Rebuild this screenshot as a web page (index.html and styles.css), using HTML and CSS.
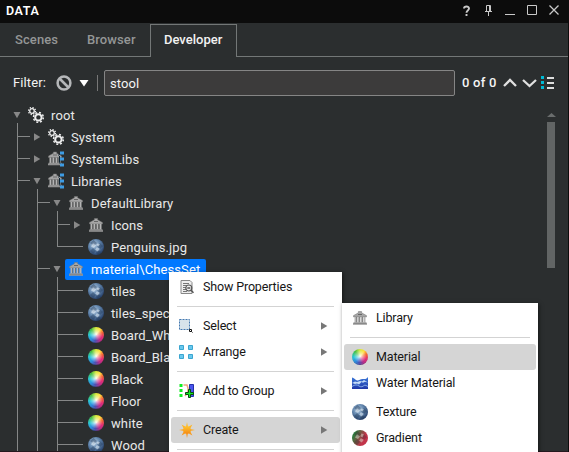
FILE: index.html
```html
<!DOCTYPE html>
<html lang="en">
<head>
<meta charset="utf-8">
<title>Data</title>
<link rel="stylesheet" href="styles.css">
</head>
<body>
<svg class="defs" aria-hidden="true">
  <defs>
    <radialGradient id="gBlue" cx=".4" cy=".35" r=".68"><stop offset="0" stop-color="#b5cce2"/><stop offset=".5" stop-color="#6488af"/><stop offset="1" stop-color="#243e68"/></radialGradient>
    <radialGradient id="gShade" cx=".5" cy=".45" r=".55"><stop offset="0" stop-color="#fff" stop-opacity=".95"/><stop offset=".35" stop-color="#fff" stop-opacity=".45"/><stop offset=".75" stop-color="#fff" stop-opacity="0"/><stop offset="1" stop-color="#000" stop-opacity=".3"/></radialGradient>
    <linearGradient id="gSun" x2="0" y2="1"><stop offset="0" stop-color="#ffc52e"/><stop offset="1" stop-color="#f58a16"/></linearGradient>
    <linearGradient id="gRG" x2="1" y2=".5"><stop offset=".2" stop-color="#2c7a3c"/><stop offset=".8" stop-color="#c2344a"/></linearGradient>
    <linearGradient id="gWater" x2="0" y2="1"><stop offset="0" stop-color="#3b78d8"/><stop offset="1" stop-color="#2038a8"/></linearGradient>
    <clipPath id="ball"><circle cx="8" cy="8" r="7.9"/></clipPath>
  </defs>
  <symbol id="gears" viewBox="0 0 16 16">
    <g fill="none" stroke="#efefef">
      <circle cx="4" cy="4" r="2.3" stroke-width="1.3"/><circle cx="4" cy="4" r="3.5" stroke-width="1.3" stroke-dasharray="1.3 1.45"/>
      <circle cx="10.4" cy="10.4" r="3.2" stroke-width="2"/><circle cx="10.4" cy="10.4" r="4.9" stroke-width="1.5" stroke-dasharray="2 1.85"/>
    </g>
  </symbol>
  <symbol id="bank" viewBox="0 0 16 16">
    <path fill="#a6a6a6" stroke="#777" stroke-width=".5" d="M1.5 5.6 6.4 2.8V1.5h3.2v1.3l4.9 2.8v1.3h-13z"/>
    <path fill="#b4b4b4" d="M2.5 7h2v5.5h-2zM5.4 7h2v5.5h-2zM8.5 7h2v5.5h-2zM11.5 7h2v5.5h-2z"/>
    <path fill="#666" d="M4.1 7h.7v5.5h-.7zM7.1 7h.7v5.5h-.7zM10.1 7h.7v5.5h-.7zM6 4h4v1H6z"/>
    <path fill="#9b9b9b" d="M1.5 12.2h13v1H15v1.6H1v-1.6h.5z"/><path fill="#777" d="M1.5 13.2h13v.5h-13z"/>
  </symbol>
  <symbol id="banks" viewBox="0 0 16 16">
    <use href="#bank" x="-1" y="-.5" width="16" height="16"/>
    <path fill="none" stroke="#0d2434" d="M10.500 4.500 12 2.500M11.500 5v6l1 2.500M11.500 8H13"/>
    <path fill="#3e9ce4" d="M12 .5h4v3h-4zM12 6.500h4v3h-4zM12 12.500h4v3h-4z"/>
  </symbol>
  <symbol id="texture" viewBox="0 0 16 16">
    <circle cx="8" cy="8" r="8" fill="url(#gBlue)"/>
    <g clip-path="url(#ball)"><path fill="#1d3552" opacity=".4" d="M5.500 1 9 4 6 7 2 4zM12 4l3 3-3 3-3-3zM5 9l3 3-3 3-3-3zM10 11l3 2-3 3-2-2z"/><path fill="#dce8f2" opacity=".6" d="M5 4.300 8 6.500 6 9 3 7.600zM9.500 4.400l2.400.8-1.500 2.200-2-1.100zM8.800 8.300l3 1.500-2 2.800-2.600-1.800z"/></g>
  </symbol>
  <symbol id="gradient" viewBox="0 0 16 16">
    <circle cx="8" cy="8" r="8" fill="url(#gRG)"/>
    <g clip-path="url(#ball)"><path fill="#17232a" opacity=".25" d="M5.500 1 9 4 6 7 2 4zM12 4l3 3-3 3-3-3zM5 9l3 3-3 3-3-3z"/><path fill="#e6eee1" opacity=".45" d="M5 4.300 8 6.500 6 9 3 7.600zM9.500 3.400l2.400.8-1.500 3.200-2-1.100zM8.800 8.300l3 1.500-2 2.800-2.600-1.800z"/></g>
  </symbol>
  <symbol id="glass" viewBox="0 0 16 16"><circle cx="8" cy="8" r="8" fill="url(#gShade)"/></symbol>
  <symbol id="water" viewBox="0 0 16 16">
    <path fill="url(#gWater)" d="M0 2.500c2 0 3 2.500 5 3S8 4 10.500 4 14 4.500 16 2v12H0z"/>
    <path fill="#c4dcf8" d="m0 8 3-1.500 2 .5 3-1 2 .5 2-1.500 4 2.500-3-.7-2 1-1.500-.8L7 9.500 5 8.500 3 9z"/>
    <path fill="none" stroke="#9fc3f2" stroke-width=".8" d="M0 11.500c3-2 5-2 7-.5s4 .5 5-.5 3 .5 4 1"/>
  </symbol>
  <symbol id="tri-r" viewBox="0 0 8 8"><path d="M1 .3 7.300 4 1 7.700z"/></symbol>
  <symbol id="tri-d" viewBox="0 0 8 8"><path d="M.5 1h7L4 7.300z"/></symbol>
</svg>

<div class="window">
  <header class="titlebar">
    <h1>DATA</h1>
    <svg class="controls" width="104" height="16" viewBox="0 0 104 16">
      <g fill="none" stroke="#c9c9c9">
        <path stroke-width="1.900" d="M3 4.500C3.200 1.900 8 1.800 8 4.600c0 1.900-2.500 2-2.500 4.100M5.500 10v2"/>
        <path d="M25.500 1.500h4v6h-4zM24 7.500h7M27.500 8v4M28.500 2v5"/>
        <path d="M44 10.500h10M66.500 1.500h9v9h-9z"/>
        <path stroke-width="1.300" d="m88.500 1.500 9 9m0-9-9 9"/>
      </g>
    </svg>
  </header>
  <nav class="tabs">
    <span class="tab scenes">Scenes</span><span class="tab browser">Browser</span><span class="tab active">Developer</span><span class="rest"></span>
  </nav>
  <div class="filter">
    <label>Filter:</label>
    <svg class="ban" width="16" height="16" viewBox="0 0 16 16"><g fill="none" stroke="#b5b7b9" stroke-width="2.500"><circle cx="8" cy="8" r="6.400"/><path d="m4 4 8 8"/></g></svg>
    <svg class="drop" width="10" height="8" viewBox="0 0 10 8"><path fill="#fff" d="M.5 1h9L5 7.500z"/></svg>
    <span class="sep"></span>
    <div class="field">stool</div>
    <span class="count">0 of 0</span>
    <svg class="nav" width="54" height="16" viewBox="0 0 54 16">
      <path fill="none" stroke="#e0e0e0" stroke-width="2.300" d="m1 11 6-6 6 6M20 5l6.500 6L33 5"/>
      <path fill="#00b9d4" d="M38 1h3v3h-3zM38 6h3v3h-3zM38 11h3v3h-3z"/><path fill="#ddd" d="M44 2h7v2h-7zM44 7h7v2h-7zM44 12h7v2h-7z"/>
    </svg>
  </div>
  <main class="content">
    <ul class="tree">
      <li><i class="node open"><svg><use href="#tri-d"/></svg></i><span class="item"><svg class="icon"><use href="#gears"/></svg>root</span></li>
      <li><i class="line tick"></i><i class="node"><svg><use href="#tri-r"/></svg></i><span class="item"><svg class="icon"><use href="#gears"/></svg>System</span></li>
      <li><i class="line tick"></i><i class="node"><svg><use href="#tri-r"/></svg></i><span class="item"><svg class="icon"><use href="#banks"/></svg>SystemLibs</span></li>
      <li><i class="line tick"></i><i class="node open"><svg><use href="#tri-d"/></svg></i><span class="item"><svg class="icon"><use href="#banks"/></svg>Libraries</span></li>
      <li><i class="line"></i><i class="line tick"></i><i class="node open"><svg><use href="#tri-d"/></svg></i><span class="item"><svg class="icon"><use href="#bank"/></svg>DefaultLibrary</span></li>
      <li><i class="line"></i><i class="line"></i><i class="line tick"></i><i class="node"><svg><use href="#tri-r"/></svg></i><span class="item"><svg class="icon"><use href="#bank"/></svg>Icons</span></li>
      <li><i class="line"></i><i class="line"></i><i class="line long last"></i><i class="node"></i><span class="item"><svg class="icon"><use href="#texture"/></svg>Penguins.jpg</span></li>
      <li><i class="line"></i><i class="line tick"></i><i class="node open"><svg><use href="#tri-d"/></svg></i><span class="item selected"><svg class="icon"><use href="#bank"/></svg>material\ChessSet</span></li>
      <li><i class="line"></i><i class="line"></i><i class="line long"></i><i class="node"></i><span class="item"><svg class="icon"><use href="#texture"/></svg>tiles</span></li>
      <li><i class="line"></i><i class="line"></i><i class="line long"></i><i class="node"></i><span class="item"><svg class="icon"><use href="#texture"/></svg>tiles_spec</span></li>
      <li><i class="line"></i><i class="line"></i><i class="line long"></i><i class="node"></i><span class="item"><svg class="icon wheel"><use href="#glass"/></svg>Board_White</span></li>
      <li><i class="line"></i><i class="line"></i><i class="line long"></i><i class="node"></i><span class="item"><svg class="icon wheel"><use href="#glass"/></svg>Board_Black</span></li>
      <li><i class="line"></i><i class="line"></i><i class="line long"></i><i class="node"></i><span class="item"><svg class="icon wheel"><use href="#glass"/></svg>Black</span></li>
      <li><i class="line"></i><i class="line"></i><i class="line long"></i><i class="node"></i><span class="item"><svg class="icon wheel"><use href="#glass"/></svg>Floor</span></li>
      <li><i class="line"></i><i class="line"></i><i class="line long"></i><i class="node"></i><span class="item"><svg class="icon wheel"><use href="#glass"/></svg>white</span></li>
      <li><i class="line"></i><i class="line"></i><i class="line long"></i><i class="node"></i><span class="item"><svg class="icon"><use href="#texture"/></svg>Wood</span></li>
    </ul>
    <div class="scroll"><svg width="9" height="6" viewBox="0 0 9 6"><path fill="#6a6d6d" d="M0 5h9L4.500 1z"/></svg><div class="thumb"></div></div>
  </main>
</div>

<div class="menu main-menu">
  <div class="entry"><svg class="icon" viewBox="0 0 16 16"><path fill="#eee" stroke="#888" d="M2 1.500h9l2 2v11H2z"/><path stroke="#777" d="M4 4.500h6M4 6.500h4M4 8.500h3M4 10.500h3M4 12.500h4"/><circle cx="9.800" cy="9" r="3" fill="#eee" stroke="#555" stroke-width="1.200"/><path stroke="#555" stroke-width="1.500" d="m12 11.200 2.500 2.500M8.300 9h3"/></svg>Show Properties</div>
  <hr>
  <div class="entry"><svg class="icon" viewBox="0 0 16 16"><path fill="#d7e3eb" stroke="#4378b0" stroke-dasharray="2 1" d="M.5 1.500h10v10H.5z"/><path fill="none" stroke="#111" d="M10.500 11.500h2v2h-2zM12.500 13.500l1 1"/></svg>Select<svg class="more"><use href="#tri-r"/></svg></div>
  <div class="entry"><svg class="icon" viewBox="0 0 16 16"><path fill="#69c8ee" stroke="#3ba5cf" d="M.5 1.500h4v4h-4zM9.500 1.500h4v4h-4zM.5 10.500h4v4h-4zM9.500 10.500h4v4h-4z"/></svg>Arrange<svg class="more"><use href="#tri-r"/></svg></div>
  <hr>
  <div class="entry"><svg class="icon" viewBox="0 0 16 16"><path fill="#12ed22" d="M.5 1h3v3h-3zM.5 6h3v3h-3zM.5 11h3v3h-3z"/><path fill="none" stroke="#efa57d" stroke-width="1.500" d="M4.500 2H8l1 3v4l-3 4"/><path fill="#4a55ed" stroke="#2430aa" d="M10.500 1.500h4v12h-4z"/><path fill="#12ed22" stroke="#064d10" d="M9.500 6.500h2v3h3v2h-3v3h-2v-3h-3v-2h3z"/></svg>Add to Group<svg class="more"><use href="#tri-r"/></svg></div>
  <hr>
  <div class="entry hover"><svg class="icon" viewBox="0 0 16 16"><path fill="url(#gSun)" d="m8 0 1 5L13.400 2.500 11 7l5 1-5 1 2.400 4.500L9 11l-1 5-1-5-4.400 2.500L5 9 0 8l5-1-2.400-4.500L7 5z"/><circle cx="8" cy="8" r="3.800" fill="url(#gSun)"/></svg>Create<svg class="more"><use href="#tri-r"/></svg></div>
  <hr>
</div>

<div class="menu sub-menu">
  <div class="entry"><svg class="icon"><use href="#bank"/></svg>Library</div>
  <hr>
  <div class="entry hover"><svg class="icon wheel"><use href="#glass"/></svg>Material</div>
  <div class="entry"><svg class="icon"><use href="#water"/></svg>Water Material</div>
  <div class="entry spaced"><svg class="icon"><use href="#texture"/></svg>Texture</div>
  <div class="entry"><svg class="icon"><use href="#gradient"/></svg>Gradient</div>
</div>
</body>
</html>
```
FILE: styles.css
```css
* { box-sizing: border-box; }
html, body { margin: 0; height: 452px; overflow: hidden; }
body { position: relative; background: #0c0c0c; color: #e8e8e8; font: 13px/22px Roboto, "Liberation Sans", sans-serif; letter-spacing: .1px; white-space: nowrap; }
.defs { position: absolute; width: 0; height: 0; }
svg { flex: none; }
.icon { width: 16px; height: 16px; }
.wheel { border-radius: 50%; background: conic-gradient(from 0deg, #d7e935, #ffdf38 35deg, #f66a2c 65deg, #e42372 110deg, #b82486 145deg, #4b48ad 185deg, #2388df 225deg, #24c8d8 270deg, #42bf3b 320deg, #d7e935); }

.window { display: flex; flex-direction: column; height: 452px; }
.titlebar { display: flex; flex: none; justify-content: space-between; height: 23px; padding: 0 4px 0 6px; }
.titlebar h1 { margin: 0; color: #fff; font-size: 12.5px; font-weight: 600; line-height: 21px; letter-spacing: .6px; }
.controls { margin-top: 4px; }

.tabs { display: flex; flex: none; height: 34px; padding-top: 1px; margin-right: 1px; background: #2b2e2f; font-weight: 500; }
.tab { border-bottom: 1px solid #737777; color: #949696; line-height: 31px; padding-left: 15px; }
.scenes { width: 72px; }
.browser { width: 78px; }
.tab.active { width: 87px; padding-left: 13px; border: 1px solid #737777; border-bottom: 0; color: #f2f2f2; line-height: 30px; letter-spacing: 0; }
.rest { flex: 1; border-bottom: 1px solid #737777; }

.filter { display: flex; flex: none; align-items: center; height: 47px; margin-right: 1px; padding: 4px 0 0 13px; background: #2b2e2f; color: #f4f4f4; }
.filter label { width: 43px; }
.drop { margin-left: 7px; }
.sep { width: 1px; height: 16px; margin-left: 8px; background: #777; }
.field { width: 351px; height: 26px; margin-left: 6px; padding-left: 5px; border: 1px solid #858585; border-radius: 2px; background: #3c3b3b; line-height: 25px; }
.count { width: 41px; margin-left: 7px; font-weight: 500; letter-spacing: .25px; }

.content { display: flex; flex: 1; min-height: 0; margin-right: 1px; background: #2b2e2f; border-bottom: 1px solid #24191f; }
.tree { flex: 1; margin: 0; padding: 0 0 0 7px; list-style: none; overflow: hidden; }
.tree li { display: flex; height: 22px; }
.tree i { position: relative; flex: none; width: 20px; height: 22px; }
.node svg { display: block; width: 8px; height: 8px; margin: 7px 0 0 6px; fill: #888; }
.line::before, .open::after { content: ""; position: absolute; left: 10px; top: 0; bottom: 0; width: 1px; background: #858787; }
.open::after { top: 19px; }
.line.last::before { bottom: 11px; }
.tick::after, .long::after { content: ""; position: absolute; left: 10px; top: 10px; width: 13px; height: 1px; background: #858787; }
.long::after { width: 26px; }
.item { display: flex; height: 21px; margin-top: 1px; line-height: 21px; }
.item .icon { margin: 2px 7px 0 1px; }
.item.selected { margin-left: -2px; padding: 0 6px 0 2px; border-radius: 2px; background: #0078ff; color: #fff; }
.scroll { width: 23px; padding: 8px 0 0 2px; }
.scroll svg { display: block; }
.thumb { width: 8px; height: 146px; margin-top: 4px; background: #626565; }

.menu { position: absolute; background: #fff; color: #161616; font-size: 12.5px; letter-spacing: -.15px; box-shadow: 1px 1px 4px rgba(0, 0, 0, .55); }
.main-menu { left: 169px; top: 272px; width: 173px; height: 190px; padding: 2px 2px 0; }
.sub-menu { left: 342px; top: 303px; width: 196px; height: 160px; padding: 2px 2px 0; }
.entry { display: flex; align-items: center; height: 26px; padding-left: 8px; border-radius: 3px; }
.entry .icon { margin-right: 8px; }
.entry.hover { background: #d5d5d5; }
.entry.spaced { margin-top: 3px; }
.entry .more { width: 8px; height: 10px; margin: 0 12px 0 auto; fill: #777; }
.menu hr { height: 1px; margin: 6px; border: 0; background: #d3d3d3; }
```
